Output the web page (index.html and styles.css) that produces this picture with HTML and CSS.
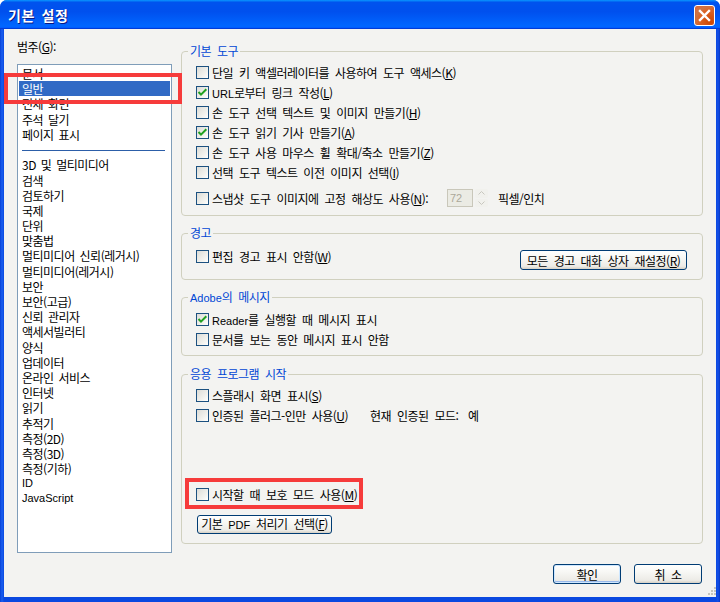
FILE: index.html
```html
<!DOCTYPE html>
<html lang="ko">
<head>
<meta charset="utf-8">
<title>기본 설정</title>
<link rel="stylesheet" href="styles.css">
</head>
<body>
<div class="window">
  <div class="titlebar">
    <span class="title">기본 설정</span>
    <span class="close">
      <svg width="21" height="21" viewBox="0 0 21 21"><path d="M6 6 L15 15 M15 6 L6 15" stroke="#fff" stroke-width="2.4" stroke-linecap="square"/></svg>
    </span>
  </div>
  <div class="client">
    <div class="main">
      <div class="left">
        <div class="label">범주(<u>G</u>):</div>
        <div class="listbox">
          <div class="item">문서</div>
          <div class="item sel">일반</div>
          <div class="item">전체 화면</div>
          <div class="item">주석 달기</div>
          <div class="item">페이지 표시</div>
          <div class="sep"></div>
          <div class="item">3D 및 멀티미디어</div>
          <div class="item">검색</div>
          <div class="item">검토하기</div>
          <div class="item">국제</div>
          <div class="item">단위</div>
          <div class="item">맞춤법</div>
          <div class="item">멀티미디어 신뢰(레거시)</div>
          <div class="item">멀티미디어(레거시)</div>
          <div class="item">보안</div>
          <div class="item">보안(고급)</div>
          <div class="item">신뢰 관리자</div>
          <div class="item">액세서빌러티</div>
          <div class="item">양식</div>
          <div class="item">업데이터</div>
          <div class="item">온라인 서비스</div>
          <div class="item">인터넷</div>
          <div class="item">읽기</div>
          <div class="item">추적기</div>
          <div class="item">측정(2D)</div>
          <div class="item">측정(3D)</div>
          <div class="item">측정(기하)</div>
          <div class="item latin">ID</div>
          <div class="item latin">JavaScript</div>
        </div>
        <div class="mark mark-list"></div>
      </div>
      <div class="right">
        <fieldset class="group g1">
          <legend>기본 도구</legend>
          <div class="row"><span class="cb"></span><span>단일 키 액셀러레이터를 사용하여 도구 액세스(<u>K</u>)</span></div>
          <div class="row"><span class="cb on"><svg width="11" height="11" viewBox="0 0 11 11"><path d="M1.5 5 L4 7.6 L9.3 2.2" fill="none" stroke="#21a121" stroke-width="2"/></svg></span><span><span class="lat">URL</span>로부터 링크 작성(<u>L</u>)</span></div>
          <div class="row"><span class="cb"></span><span>손 도구 선택 텍스트 및 이미지 만들기(<u>H</u>)</span></div>
          <div class="row"><span class="cb on"><svg width="11" height="11" viewBox="0 0 11 11"><path d="M1.5 5 L4 7.6 L9.3 2.2" fill="none" stroke="#21a121" stroke-width="2"/></svg></span><span>손 도구 읽기 기사 만들기(<u>A</u>)</span></div>
          <div class="row"><span class="cb"></span><span>손 도구 사용 마우스 휠 확대/축소 만들기(<u>Z</u>)</span></div>
          <div class="row"><span class="cb"></span><span>선택 도구 텍스트 이전 이미지 선택(<u>I</u>)</span></div>
          <div class="row snap">
            <span class="cb"></span><span class="snaplabel">스냅샷 도구 이미지에 고정 해상도 사용(<u>N</u>):</span>
            <span class="spin"><span class="spinval">72</span></span>
            <span class="spinbtns">
              <span class="sb"><svg width="7" height="4" viewBox="0 0 7 4"><path d="M0.5 3.5 L3.5 0.5 L6.5 3.5" fill="none" stroke="#c8c7bf" stroke-width="1"/></svg></span>
              <span class="sb"><svg width="7" height="4" viewBox="0 0 7 4"><path d="M0.5 0.5 L3.5 3.5 L6.5 0.5" fill="none" stroke="#c8c7bf" stroke-width="1"/></svg></span>
            </span>
            <span class="unit">픽셀/인치</span>
          </div>
        </fieldset>
        <fieldset class="group g2">
          <legend>경고</legend>
          <div class="warnrow">
            <div class="row"><span class="cb"></span><span>편집 경고 표시 안함(<u>W</u>)</span></div>
            <button class="btn reset"><span>모든 경고 대화 상자 재설정(<u>R</u>)</span></button>
          </div>
        </fieldset>
        <fieldset class="group g3">
          <legend><span class="lat">Adobe</span>의 메시지</legend>
          <div class="row"><span class="cb on"><svg width="11" height="11" viewBox="0 0 11 11"><path d="M1.5 5 L4 7.6 L9.3 2.2" fill="none" stroke="#21a121" stroke-width="2"/></svg></span><span><span class="lat">Reader</span>를 실행할 때 메시지 표시</span></div>
          <div class="row"><span class="cb"></span><span>문서를 보는 동안 메시지 표시 안함</span></div>
        </fieldset>
        <fieldset class="group g4">
          <legend>응용 프로그램 시작</legend>
          <div class="row"><span class="cb"></span><span>스플래시 화면 표시(<u>S</u>)</span></div>
          <div class="row"><span class="cb"></span><span class="certlabel">인증된 플러그-인만 사용(<u>U</u>)</span><span class="certmode">현재 인증된 모드:</span><span>예</span></div>
          <div class="mark mark-row">
            <div class="row"><span class="cb"></span><span>시작할 때 보호 모드 사용(<u>M</u>)</span></div>
          </div>
          <button class="btn pdf"><span>기본 <span class="lat">PDF</span> 처리기 선택(<u>F</u>)</span></button>
        </fieldset>
      </div>
    </div>
    <div class="footer">
      <button class="btn ok"><span>확인</span></button>
      <button class="btn"><span>취 소</span></button>
    </div>
    <div class="grip">
      <svg width="10" height="10" viewBox="0 0 10 10" fill="#c6c5bd">
        <rect x="8" y="0" width="2" height="2"/>
        <rect x="5" y="3" width="2" height="2"/><rect x="8" y="3" width="2" height="2"/>
        <rect x="2" y="6" width="2" height="2"/><rect x="5" y="6" width="2" height="2"/><rect x="8" y="6" width="2" height="2"/>
      </svg>
    </div>
  </div>
</div>
</body>
</html>
```
FILE: styles.css
```css
* { box-sizing: border-box; }
html, body { margin: 0; padding: 0; }
body {
  width: 720px;
  height: 602px;
  overflow: hidden;
  font-family: "Noto Sans CJK KR", "Liberation Sans", sans-serif;
  font-size: 12px;
  letter-spacing: -0.5px;
  word-spacing: 3px;
  color: #000;
}
u { text-decoration: underline; text-underline-offset: 1px; }
.lat { font-family: "Liberation Sans", sans-serif; font-size: 11px; letter-spacing: 0; word-spacing: 0; }

.window {
  width: 720px;
  height: 602px;
  display: flex;
  flex-direction: column;
  background: linear-gradient(90deg, #0840d6 0, #1a5ff0 2px, #0a48e0 4px, #0a48e0 716px, #1450e8 718px, #0636c4 720px);
  border-radius: 7px 7px 0 0;
  overflow: hidden;
}

.titlebar {
  height: 29px;
  flex: none;
  display: flex;
  align-items: center;
  justify-content: space-between;
  padding: 0 5px 0 8px;
  background: linear-gradient(180deg, #0997ff 0, #0053ee 8%, #0050ee 40%, #0066ff 88%, #0066ff 93%, #005bff 95%, #003dd7 96%, #003dd7 100%);
}
.title {
  color: #fff;
  font-weight: bold;
  font-size: 14px;
  letter-spacing: 0.6px;
  word-spacing: 2px;
  text-shadow: 1px 1px 0 #0a1883;
  margin-top: 1px;
}
.close {
  width: 21px;
  height: 21px;
  margin-top: 2px;
  border: 1px solid #fff;
  border-radius: 3px;
  background: radial-gradient(circle at 85% 85%, #cc4600 0, #dc6527 55%, #cd7546 70%, #e26b3d 100%);
  display: flex;
  align-items: center;
  justify-content: center;
  box-shadow: inset 0 0 2px #d15c2b;
}
.close svg { margin: -1px; }

.client {
  flex: 1;
  margin: 0 4px 5px 4px;
  background: #f3f3f1;
  padding: 11px 13px 0 13px;
  display: flex;
  flex-direction: column;
  position: relative;
}

.main {
  display: flex;
  gap: 9px;
  align-items: flex-start;
}

.left {
  width: 155px;
  flex: none;
  position: relative;
}
.label {
  line-height: 14px;
  height: 14px;
  margin-bottom: 10px;
}
.listbox {
  height: 489px;
  border: 1px solid #7f9db9;
  background: #fff;
  padding: 1px 1px 0 1px;
  overflow: hidden;
}
.item {
  height: 15.2px;
  line-height: 15.2px;
  padding-left: 3px;
  white-space: nowrap;
  word-spacing: 2px;
}
.item.latin {
  font-family: "Liberation Sans", sans-serif;
  font-size: 11px;
  letter-spacing: 0;
}
.item.sel {
  background: #316ac5;
  color: #fff;
}
.sep {
  height: 15.4px;
  display: flex;
  align-items: center;
  padding: 0 5px 0 3px;
}
.sep::before {
  content: "";
  display: block;
  flex: 1;
  height: 1px;
  margin-top: 1px;
  background: #2c5ea8;
}

.mark {
  border: 4px solid #f63b3b;
}
.mark-list {
  position: absolute;
  left: -13px;
  top: 33px;
  width: 178px;
  height: 31px;
}

.right {
  flex: 1;
  margin-top: 4px;
  width: 522px;
}
.group {
  margin: 0;
  border: 1px solid #d0d0bf;
  border-radius: 4px;
  padding: 4px 14px 7px 14px;
  min-width: 0;
}
.group legend {
  color: #0046d5;
  line-height: 14px;
  padding: 0 2px;
  margin-left: -8px;
}
.group legend .lat { font-size: 11px; }
.g2 { margin-top: 10px; padding-top: 6px; padding-bottom: 9px; padding-right: 15px; }
.g3 { margin-top: 10px; padding-bottom: 6px; }
.g4 { margin-top: 11px; padding-bottom: 9px; }

.row {
  display: flex;
  align-items: center;
  height: 20px;
  white-space: nowrap;
}
.cb {
  width: 13px;
  height: 13px;
  flex: none;
  border: 1px solid #1c5180;
  background: linear-gradient(135deg, #dcdcd7 0, #f4f4f0 70%, #fff 100%);
  margin-right: 3px;
  display: flex;
  align-items: center;
  justify-content: center;
}

.snap { margin-top: 6px; }
.snaplabel { width: 235px; }
.spin {
  width: 26px;
  height: 18px;
  border: 1px solid #c9c7ba;
  background: #ebebe4;
  color: #aca899;
  font-family: "Liberation Sans", sans-serif;
  font-size: 11px;
  letter-spacing: 0;
  line-height: 16px;
  padding-left: 2px;
}
.spinbtns {
  width: 13px;
  height: 18px;
  margin-left: 2px;
  display: flex;
  flex-direction: column;
  gap: 1px;
}
.sb {
  flex: 1;
  display: flex;
  align-items: center;
  justify-content: center;
  background: #f1f1ed;
  border-radius: 2px;
}
.unit { margin-left: 10px; }

.warnrow {
  display: flex;
  justify-content: space-between;
  align-items: flex-start;
}
.btn {
  font-family: inherit;
  font-size: 12px;
  letter-spacing: -0.5px;
  word-spacing: 3px;
  color: #000;
  height: 20px;
  padding: 0;
  border: 1px solid #003c74;
  border-radius: 3px;
  background: linear-gradient(180deg, #ffffff 0, #f7f7f4 40%, #ecebe6 85%, #d6d0c5 100%);
  line-height: 17px;
  display: flex;
  align-items: center;
  justify-content: center;
  white-space: nowrap;
}
.reset { width: 167px; margin-top: 4px; }

.certlabel { width: 158px; }
.certmode { width: 98px; }

.mark-row {
  width: 178px;
  margin-left: -11px;
  margin-top: 53px;
  padding: 2px 0 1px 7px;
}
.pdf { width: 135px; height: 19px; margin-top: 6px; margin-left: 1px; }

.footer {
  display: flex;
  justify-content: flex-end;
  gap: 13px;
  margin-top: 11px;
  margin-right: 1px;
}
.footer .btn { width: 68px; height: 20px; }
.footer .ok { box-shadow: inset 0 0 0 1px #cee7ff, inset 0 -1px 0 1px #98b8ea; }

.grip {
  position: absolute;
  right: 0;
  bottom: 0;
  width: 10px;
  height: 10px;
}
.grip svg { display: block; }
```
